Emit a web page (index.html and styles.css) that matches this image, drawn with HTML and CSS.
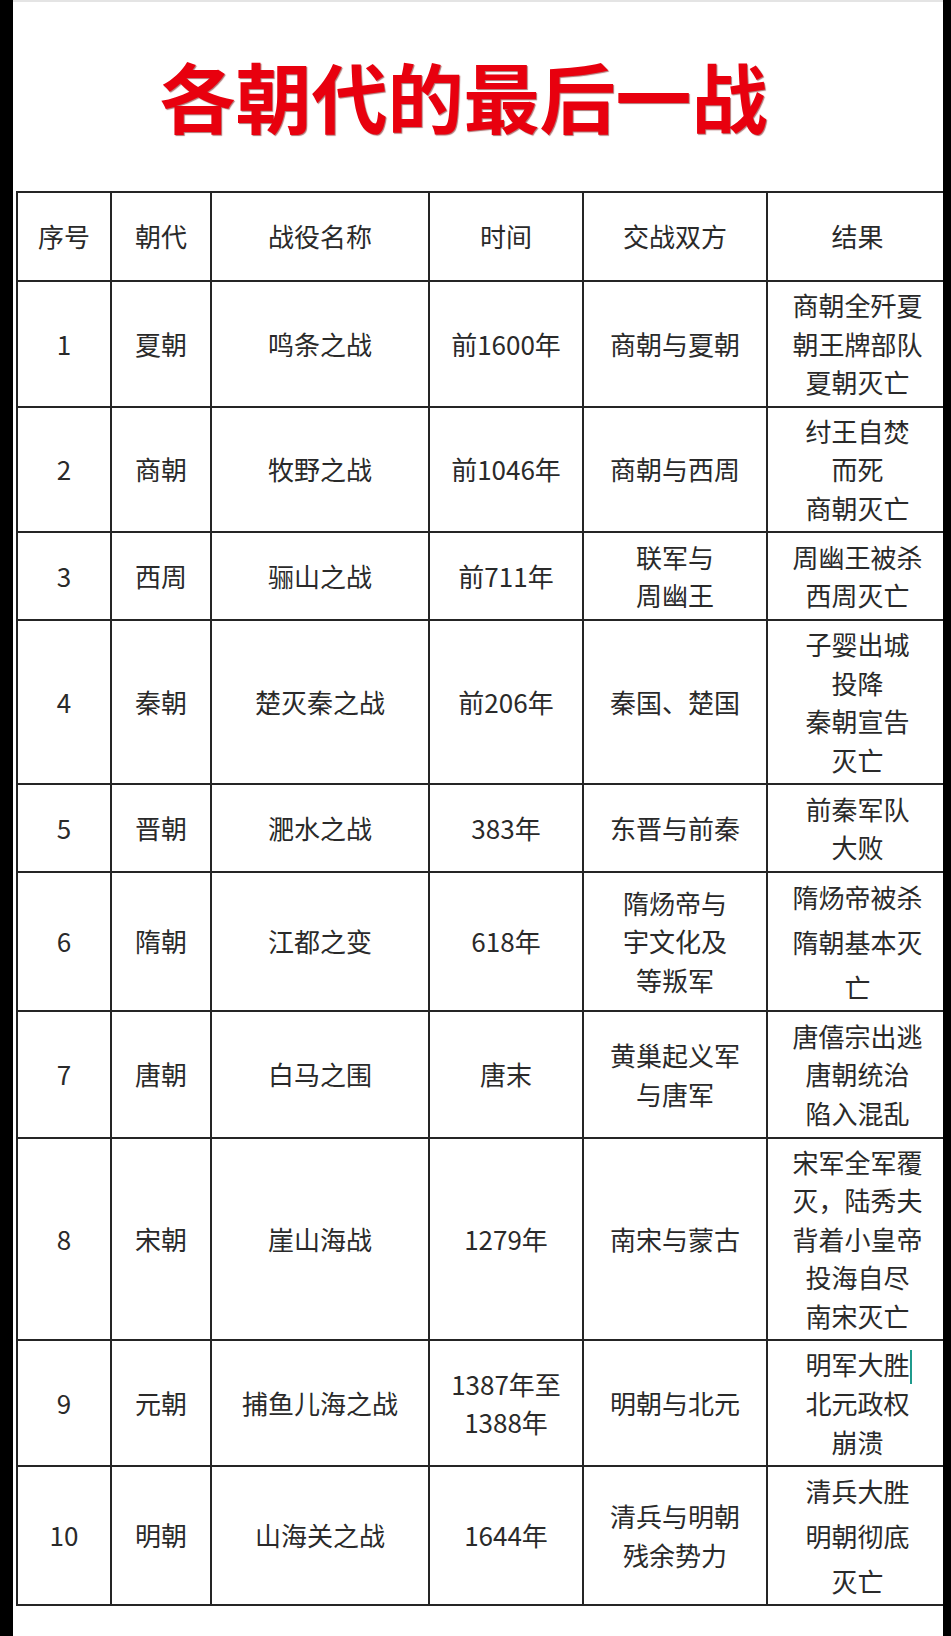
FILE: index.html
```html
<!DOCTYPE html>
<html lang="zh-CN">
<head>
<meta charset="utf-8">
<title>各朝代的最后一战</title>
<link rel="stylesheet" href="styles.css">
</head>
<body>
<div class="page">
  <h1 class="title">各朝代的最后一战</h1>
  <div class="table-wrap">
    <table class="battles">
      <colgroup>
        <col class="c-no">
        <col class="c-dyn">
        <col class="c-name">
        <col class="c-time">
        <col class="c-sides">
        <col class="c-result">
      </colgroup>
      <tr class="r-head">
        <td>序号</td><td>朝代</td><td>战役名称</td><td>时间</td><td>交战双方</td><td>结果</td>
      </tr>
      <tr class="r-126">
        <td>1</td><td>夏朝</td><td>鸣条之战</td><td>前1600年</td><td>商朝与夏朝</td><td>商朝全歼夏<br>朝王牌部队<br>夏朝灭亡</td>
      </tr>
      <tr class="r-125">
        <td>2</td><td>商朝</td><td>牧野之战</td><td>前1046年</td><td>商朝与西周</td><td>纣王自焚<br>而死<br>商朝灭亡</td>
      </tr>
      <tr class="r-88">
        <td>3</td><td>西周</td><td>骊山之战</td><td>前711年</td><td>联军与<br>周幽王</td><td>周幽王被杀<br>西周灭亡</td>
      </tr>
      <tr class="r-164">
        <td>4</td><td>秦朝</td><td>楚灭秦之战</td><td>前206年</td><td>秦国、楚国</td><td>子婴出城<br>投降<br>秦朝宣告<br>灭亡</td>
      </tr>
      <tr class="r-88">
        <td>5</td><td>晋朝</td><td>淝水之战</td><td>383年</td><td>东晋与前秦</td><td>前秦军队<br>大败</td>
      </tr>
      <tr class="r-139">
        <td>6</td><td>隋朝</td><td>江都之变</td><td>618年</td><td>隋炀帝与<br>宇文化及<br>等叛军</td><td class="loose">隋炀帝被杀<br>隋朝基本灭<br>亡</td>
      </tr>
      <tr class="r-127">
        <td>7</td><td>唐朝</td><td>白马之围</td><td>唐末</td><td>黄巢起义军<br>与唐军</td><td>唐僖宗出逃<br>唐朝统治<br>陷入混乱</td>
      </tr>
      <tr class="r-202">
        <td>8</td><td>宋朝</td><td>崖山海战</td><td>1279年</td><td>南宋与蒙古</td><td>宋军全军覆<br>灭，陆秀夫<br>背着小皇帝<br>投海自尽<br>南宋灭亡</td>
      </tr>
      <tr class="r-126">
        <td>9</td><td>元朝</td><td>捕鱼儿海之战</td><td>1387年至<br>1388年</td><td>明朝与北元</td><td>明军大胜<span class="cursor"></span><br>北元政权<br>崩溃</td>
      </tr>
      <tr class="r-139">
        <td>10</td><td>明朝</td><td>山海关之战</td><td>1644年</td><td>清兵与明朝<br>残余势力</td><td class="loose">清兵大胜<br>明朝彻底<br>灭亡</td>
      </tr>
    </table>
  </div>
</div>
</body>
</html>
```
FILE: styles.css
```css
html, body {
  margin: 0;
  padding: 0;
  background: #000;
}

.page {
  margin-left: 13px;
  width: 930px;
  height: 1636px;
  box-sizing: border-box;
  background: #fff;
  border-top: 2px solid #e4e4e4;
  padding-left: 3px;
  overflow: hidden;
}

.title {
  margin: 0;
  padding: 55px 32px 0 0;
  height: 76px;
  line-height: 76px;
  font-family: "Noto Sans CJK SC", "Noto Sans", sans-serif;
  font-size: 76px;
  font-weight: 700;
  color: #e8000e;
  text-align: center;
  text-shadow: 1px 1px 1px rgba(110, 0, 0, 0.55);
  letter-spacing: 0;
}

.table-wrap {
  margin-top: 58px;
  width: 927px;
  overflow: hidden;
}

.battles {
  border-collapse: collapse;
  table-layout: fixed;
  width: 931px;
  font-family: "Noto Sans CJK SC", "Noto Sans", sans-serif;
  font-size: 26px;
  color: #2a2a2a;
}

.c-no { width: 94px; }
.c-dyn { width: 100px; }
.c-name { width: 218px; }
.c-time { width: 154px; }
.c-sides { width: 184px; }
.c-result { width: 181px; }

.battles td {
  border: 2px solid #252525;
  padding: 0;
  text-align: center;
  vertical-align: middle;
  line-height: 38.5px;
  white-space: nowrap;
}

.battles td.loose {
  line-height: 45px;
}

.r-head { height: 89px; }
.r-88 { height: 88px; }
.r-125 { height: 125px; }
.r-126 { height: 126px; }
.r-127 { height: 127px; }
.r-139 { height: 139px; }
.r-164 { height: 164px; }
.r-202 { height: 202px; }

.cursor {
  display: inline-block;
  width: 2px;
  height: 34px;
  margin-right: -2px;
  background: #1f9a8c;
  vertical-align: middle;
}
```
